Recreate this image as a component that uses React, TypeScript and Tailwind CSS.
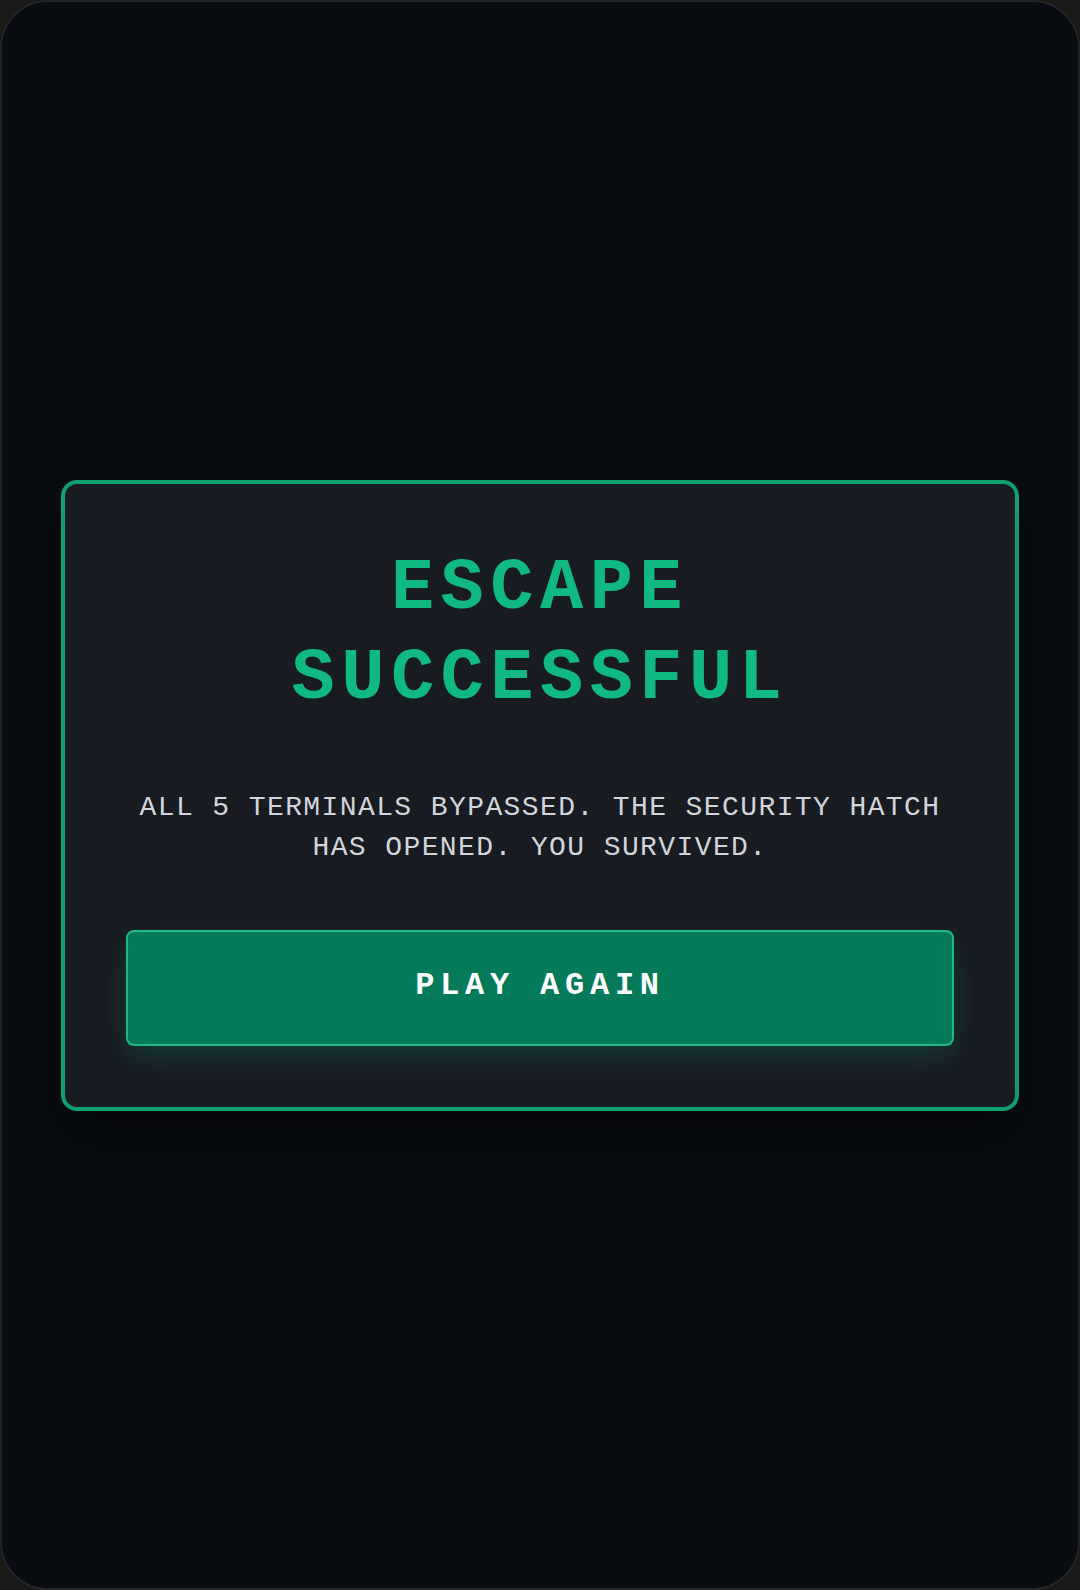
import React from "react";

export default function App() {
  return (
    <div className="w-[1080px] h-[1590px] bg-[#1c1a18]">
      <div
        className="w-full h-full rounded-[48px] border-2 border-[#232528] bg-[#090c10] flex items-center justify-center px-[59px]"
        style={{ fontFamily: '"Liberation Mono", "DejaVu Sans Mono", monospace' }}
      >
        <div className="w-full rounded-[16px] border-[4px] border-[#10a070] bg-[#181b22] px-[61px] pt-[60px] pb-[61px] shadow-[0_25px_50px_-12px_rgba(0,0,0,0.6)] flex flex-col items-stretch">
          <h1 className="text-center text-[72px] leading-[90px] font-bold tracking-[0.09em] text-[#10b981]">
            ESCAPE
            <br />
            SUCCESSFUL
          </h1>
          <p className="mt-[64px] text-center text-[28px] leading-[40px] tracking-[0.05em] text-[#d1d5db]">
            ALL 5 TERMINALS BYPASSED. THE SECURITY HATCH HAS OPENED. YOU SURVIVED.
          </p>
          <button className="mt-[62px] h-[116px] w-full rounded-[8px] border-2 border-[#1fb985] bg-[#047a5a] pb-[4px] text-white text-[32px] font-bold tracking-[0.18em] shadow-[0_12px_30px_rgba(16,185,129,0.18)]">
            PLAY AGAIN
          </button>
        </div>
      </div>
    </div>
  );
}
